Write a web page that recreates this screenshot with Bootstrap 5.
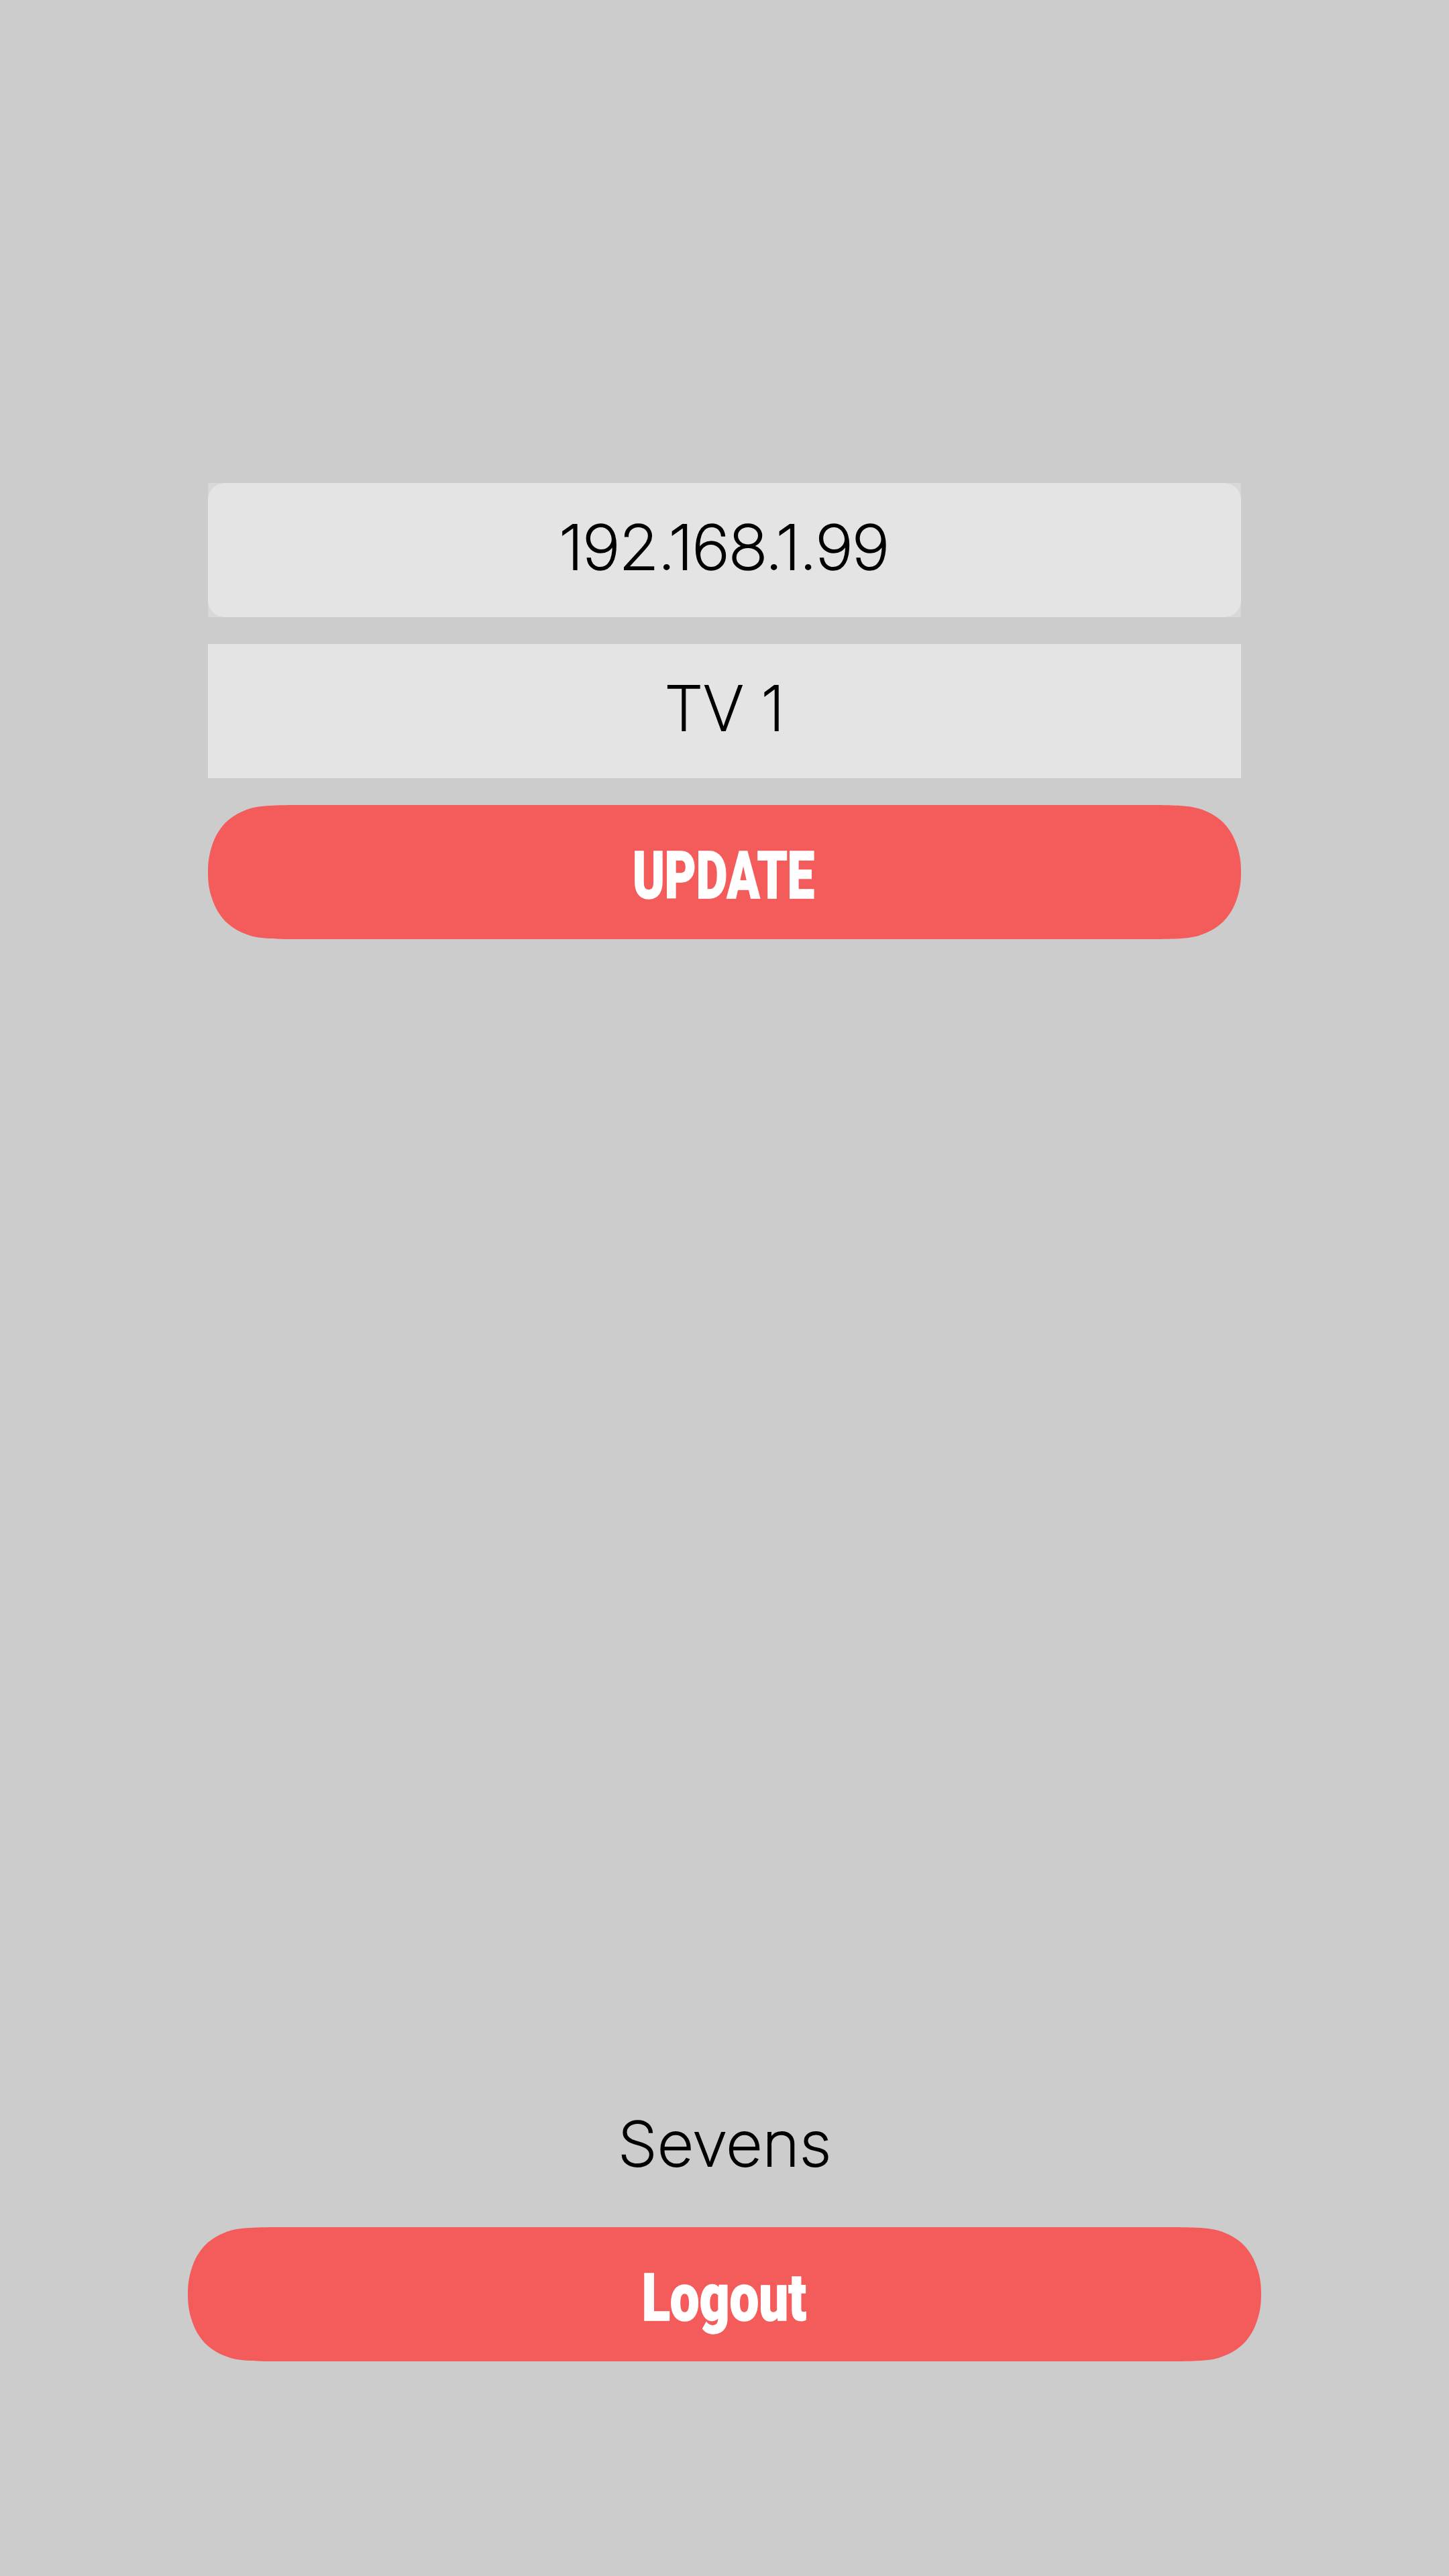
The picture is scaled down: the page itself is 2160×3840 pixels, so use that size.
<!DOCTYPE html>
<html lang="en">
<head>
<meta charset="UTF-8">
<meta name="viewport" content="width=device-width, initial-scale=1.0">
<link rel="stylesheet" href="https://cdn.jsdelivr.net/npm/bootstrap@5.3.3/dist/css/bootstrap.min.css">
<script src="https://cdn.jsdelivr.net/npm/bootstrap@5.3.3/dist/js/bootstrap.bundle.min.js"></script>
<title>Settings</title>
<style>
  body {
    background: #ccc;
    color: #000;
    font-family: Inter, "Open Sans", sans-serif;
  }
  .screen {
    height: 3840px;
    padding: 720px 280px 320px;
  }
  .settings {
    gap: 40px;
    padding: 0 30px;
  }
  .field {
    height: 200px;
    background: #e4e4e4;
  }
  .field-round {
    background: #d8d8d8;
  }
  .field-round .field-fill {
    height: 200px;
    border-radius: 25px;
    background: #e4e4e4;
  }
  .thin {
    font-size: 92px;
    font-weight: 200;
    line-height: 1;
    white-space: pre;
    padding-bottom: 9px;
    -webkit-text-stroke: 1.8px #000;
  }
  .ip {
    letter-spacing: -2px;
    padding-right: 3px;
    transform: scaleX(1.055);
  }
  .account {
    height: 200px;
    padding-bottom: 39px;
  }
  .account .thin { transform: scaleX(1.025); }
  .btn-red {
    height: 200px;
    padding: 11px 2px 0 0;
    border: 0;
    border-radius: 0;
    color: #fff;
    background: #f45b5b;
    font-family: Roboto, sans-serif;
    font-size: 98px;
    font-weight: 900;
    line-height: 1;
    -webkit-text-stroke: 1.5px #fff;
  }
  .btn-red:hover { color: #fff; background: #f45b5b; }
  .btn-red span { display: inline-block; }
  /* smooth corners, longer along the top edge than down the side */
  .btn-update {
    clip-path: path("M152 0 C109 0 80 0 63 5.3 C33 14.5 14.5 33 5.3 63 C1 76 0 88 0 100 C0 112 1 124 5.3 137 C14.5 167 33 185.5 63 194.7 C80 200 109 200 152 200 L1388 200 C1431 200 1460 200 1477 194.7 C1507 185.5 1525.5 167 1534.7 137 C1539 124 1540 112 1540 100 C1540 88 1539 76 1534.7 63 C1525.5 33 1507 14.5 1477 5.3 C1460 0 1431 0 1388 0 Z");
  }
  .btn-logout {
    clip-path: path("M152 0 C109 0 80 0 63 5.3 C33 14.5 14.5 33 5.3 63 C1 76 0 88 0 100 C0 112 1 124 5.3 137 C14.5 167 33 185.5 63 194.7 C80 200 109 200 152 200 L1448 200 C1491 200 1520 200 1537 194.7 C1567 185.5 1585.5 167 1594.7 137 C1599 124 1600 112 1600 100 C1600 88 1599 76 1594.7 63 C1585.5 33 1567 14.5 1537 5.3 C1520 0 1491 0 1448 0 Z");
  }
  .btn-update span { transform: scaleX(.735); }
  .btn-logout span { transform: scaleX(.795); }
</style>
</head>
<body>
<div class="screen d-flex flex-column justify-content-between">
  <div class="settings d-flex flex-column">
    <div class="field field-round">
      <div class="field-fill d-flex align-items-center justify-content-center"><span class="thin ip">192.168.1.99</span></div>
    </div>
    <div class="field d-flex align-items-center justify-content-center"><span class="thin">TV 1</span></div>
    <button type="button" class="btn btn-red btn-update w-100"><span>UPDATE</span></button>
  </div>
  <div class="d-flex flex-column">
    <div class="account d-flex align-items-center justify-content-center"><span class="thin">Sevens</span></div>
    <button type="button" class="btn btn-red btn-logout w-100"><span>Logout</span></button>
  </div>
</div>
</body>
</html>
